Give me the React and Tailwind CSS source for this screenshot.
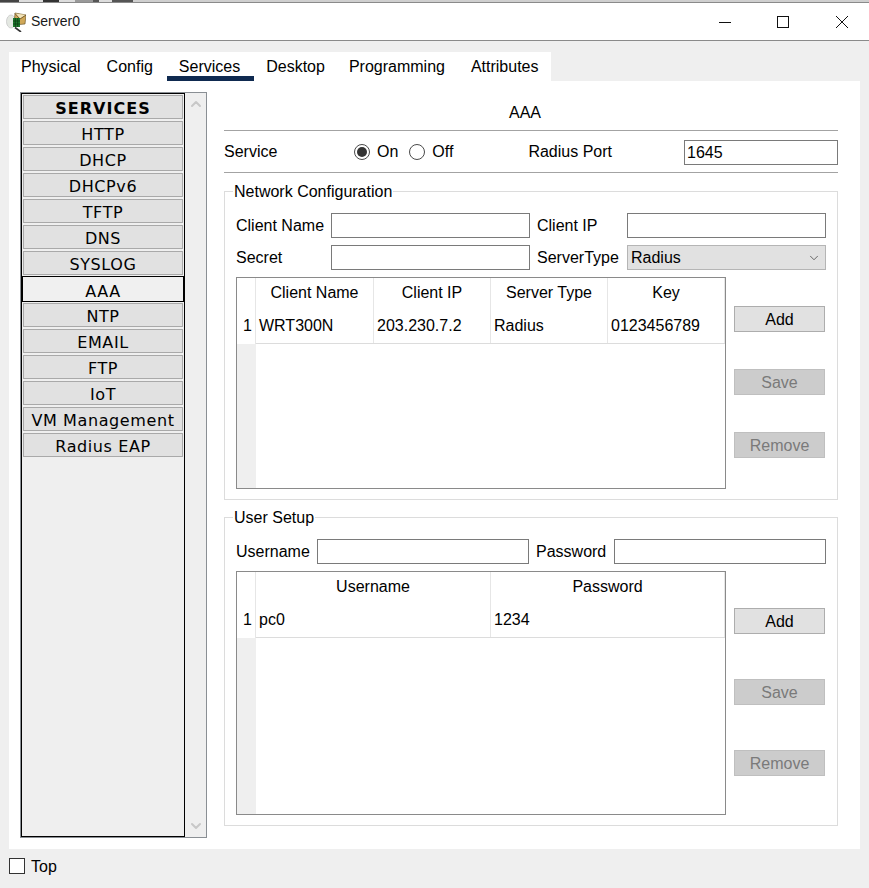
import { ChevronDown, ChevronUp } from 'lucide-react';

const TABS = ['Physical', 'Config', 'Services', 'Desktop', 'Programming', 'Attributes'];
const SERVICES = ['HTTP', 'DHCP', 'DHCPv6', 'TFTP', 'DNS', 'SYSLOG', 'AAA', 'NTP', 'EMAIL', 'FTP', 'IoT', 'VM Management', 'Radius EAP'];

function Field({ className = '', value = '' }) {
    return (
        <div className={`h-[25px] border border-[#7a7a7a] bg-white pl-[2px] leading-[23px] ${className}`}>{value}</div>
    );
}

function SideButton({ label, gap = '', disabled }) {
    return (
        <div
            className={`w-[91px] h-[26px] border text-center leading-[26px] ${gap} ${
                disabled
                    ? 'border-[#bfbfbf] bg-[#cccccc] text-[#7a7a7a]'
                    : 'border-[#adadad] bg-[#e1e1e1] text-black'
            }`}
        >
            {label}
        </div>
    );
}

function TableBox({ heightClass, columns, cells }) {
    return (
        <div className={`flex flex-col w-[490px] border border-[#8a8a8a] bg-white ${heightClass}`}>
            <div className="flex h-[32px]">
                <div className="w-[19px] shrink-0 border-r border-[#e6e6e6]" />
                {columns.map((col) => (
                    <div key={col.name} className={`${col.width} pt-[5px] text-center leading-[20px] border-r border-[#e6e6e6]`}>
                        {col.name}
                    </div>
                ))}
            </div>
            <div className="flex h-[34px]">
                <div className="w-[19px] shrink-0 pl-[6px] pt-[6px] leading-[20px] border-r border-[#e6e6e6]">1</div>
                <div className="flex grow border-b border-[#dcdcdc]">
                    {columns.map((col, i) => (
                        <div key={col.name} className={`${col.width} pl-[3px] pt-[6px] leading-[20px] border-r border-[#e6e6e6]`}>
                            {cells[i]}
                        </div>
                    ))}
                </div>
            </div>
            <div className="grow w-[19px] bg-[#efefef]" />
        </div>
    );
}

export default function App() {
    return (
        <div className="flex flex-col w-[869px] h-[888px] overflow-hidden bg-[#efefef] text-black text-[16px] font-['Liberation_Sans',Arial,sans-serif]">
            {/* strip of whatever was behind the window */}
            <div className="flex h-[2px] bg-[#cfcfcf]">
                <div className="w-[19px] bg-[#444444]" />
                <div className="w-[24px] bg-[#dddddd]" />
                <div className="w-[16px] bg-[#333333]" />
                <div className="w-[16px] bg-[#dddddd]" />
                <div className="w-[18px] bg-[#999999]" />
                <div className="w-[6px] bg-[#555555]" />
                <div className="w-[13px] bg-[#dddddd]" />
                <div className="w-[21px] bg-[#555555]" />
            </div>

            {/* title bar */}
            <div className="flex items-center h-[39px] bg-white border-t border-b border-[#8a8a8a]">
                <svg className="ml-[6px] w-[20px] h-[20px] shrink-0" viewBox="0 0 20 20">
                    <ellipse cx="5" cy="9.5" rx="4.5" ry="6.5" fill="#e4e8e2" stroke="#c8c8c8" strokeWidth="0.8" />
                    <path d="M9 1 L20 3 L19 12 L8 13 Z" fill="#d0a858" stroke="#5a4a20" strokeWidth="0.6" />
                    <path d="M9 1.5 L14 7 L20 3" fill="#f2e3b8" stroke="#5a3f10" strokeWidth="0.8" />
                    <rect x="7" y="6" width="7" height="9" fill="#1d7a2c" />
                    <path d="M9.3 6 V15 M11.7 6 V15 M7 9 H14 M7 12 H14" stroke="#0c3b14" strokeWidth="0.8" />
                    <path d="M9 15.5 L15 20" stroke="#333333" strokeWidth="1.6" />
                </svg>
                <span className="ml-[5px] text-[14px] text-[#1a1a1a]">Server0</span>
                <div className="ml-auto flex items-center">
                    <svg className="w-[12px] h-[12px] mr-[46px]" viewBox="0 0 12 12">
                        <path d="M0 6.5 H12" stroke="#111111" />
                    </svg>
                    <svg className="w-[12px] h-[12px] mr-[47px]" viewBox="0 0 12 12">
                        <rect x="0.5" y="0.5" width="11" height="11" fill="none" stroke="#111111" />
                    </svg>
                    <svg className="w-[12px] h-[12px] mr-[21px]" viewBox="0 0 12 12">
                        <path d="M0 0 L12 12 M12 0 L0 12" stroke="#111111" />
                    </svg>
                </div>
            </div>

            {/* tabs */}
            <div className="flex w-[542px] h-[29px] ml-[9px] mt-[11px] bg-white">
                {TABS.map((tab) => (
                    <div
                        key={tab}
                        className={`h-[29px] pl-[12px] leading-[29px] ${tab === 'Desktop' ? 'pr-[12px]' : 'pr-[14px]'} ${
                            tab === 'Services' ? 'border-b-[5px] border-[#0f2a50]' : ''
                        }`}
                    >
                        {tab}
                    </div>
                ))}
            </div>

            {/* panel */}
            <div className="flex w-[851px] h-[768px] ml-[9px] pl-[11px] pt-[11px] bg-white">
                {/* services list */}
                <div className="flex w-[187px] h-[746px] border border-[#8a8f94] bg-[#efefef]">
                    <div className="flex flex-col gap-[2px] w-[164px] h-full border border-black px-[1px] pt-[1px] font-['DejaVu_Sans',Verdana,sans-serif] text-[16px] tracking-[0.6px]">
                        <div className="h-[24px] border border-[#a9a9a9] bg-[#e1e1e1] text-center font-bold tracking-[1px] leading-[26px]">SERVICES</div>
                        {SERVICES.map((name) =>
                            name === 'AAA' ? (
                                <div key={name} className="h-[26px] -m-[1px] border border-black bg-[#f0f0f0] text-center leading-[30px]">
                                    {name}
                                </div>
                            ) : (
                                <div key={name} className="h-[24px] border border-[#a9a9a9] bg-[#e1e1e1] text-center leading-[26px]">
                                    {name}
                                </div>
                            )
                        )}
                    </div>
                    <div className="flex flex-col items-center justify-between grow py-[3px] text-[#c8c8c8]">
                        <ChevronUp className="w-[16px] h-[16px]" strokeWidth={3} />
                        <ChevronDown className="w-[16px] h-[16px]" strokeWidth={3} />
                    </div>
                </div>

                {/* AAA service form */}
                <div className="flex flex-col w-[614px] ml-[17px]">
                    <div className="h-[39px] pt-[12px] pr-[12px] text-center leading-[18px] border-b border-[#a3a3a3]">AAA</div>
                    <div className="flex items-center h-[42px] border-b border-[#a3a3a3]">
                        <span className="w-[130px]">Service</span>
                        <span className="flex items-center justify-center w-[16px] h-[16px] mt-px rounded-full border border-[#4a4a4a]">
                            <span className="w-[10px] h-[10px] rounded-full bg-[#333333]" />
                        </span>
                        <span className="ml-[7px] mt-px">On</span>
                        <span className="ml-[11px] mt-px w-[16px] h-[16px] rounded-full border border-[#4a4a4a]" />
                        <span className="ml-[7px] mt-px">Off</span>
                        <span className="ml-[75px] mt-px">Radius Port</span>
                        <Field className="ml-auto mt-[2px] w-[154px]" value="1645" />
                    </div>

                    <fieldset className="mt-[8px] h-[319px] border border-[#dcdcdc] px-[11px]">
                        <legend className="-ml-[3px] px-[1px] pt-[2px] leading-[18px]">Network Configuration</legend>
                        <div className="flex items-center mt-[12px] h-[25px]">
                            <span className="w-[95px]">Client Name</span>
                            <Field className="w-[199px]" />
                            <span className="ml-[7px] w-[90px]">Client IP</span>
                            <Field className="w-[199px]" />
                        </div>
                        <div className="flex items-center mt-[7px] h-[25px]">
                            <span className="w-[95px]">Secret</span>
                            <Field className="w-[199px]" />
                            <span className="ml-[7px] w-[90px]">ServerType</span>
                            <div className="flex items-center justify-between w-[199px] h-[25px] border border-[#b5b5b5] bg-[#e1e1e1] pl-[3px] pr-[4px]">
                                Radius
                                <ChevronDown className="w-[14px] h-[14px] text-[#333333]" strokeWidth={1.2} />
                            </div>
                        </div>
                        <div className="flex mt-[7px]">
                            <TableBox
                                heightClass="h-[212px]"
                                columns={[
                                    { name: 'Client Name', width: 'w-[118px]' },
                                    { name: 'Client IP', width: 'w-[117px]' },
                                    { name: 'Server Type', width: 'w-[117px]' },
                                    { name: 'Key', width: 'w-[117px]' },
                                ]}
                                cells={['WRT300N', '203.230.7.2', 'Radius', '0123456789']}
                            />
                            <div className="ml-[8px] flex flex-col pt-[29px]">
                                <SideButton label="Add" />
                                <SideButton label="Save" disabled gap="mt-[37px]" />
                                <SideButton label="Remove" disabled gap="mt-[37px]" />
                            </div>
                        </div>
                    </fieldset>

                    <fieldset className="mt-[7px] h-[319px] border border-[#dcdcdc] px-[11px]">
                        <legend className="-ml-[3px] px-[1px] pt-[2px] leading-[18px]">User Setup</legend>
                        <div className="flex items-center mt-[12px] h-[25px]">
                            <span className="w-[81px]">Username</span>
                            <Field className="w-[212px]" />
                            <span className="ml-[7px] w-[78px]">Password</span>
                            <Field className="w-[212px]" />
                        </div>
                        <div className="flex mt-[7px]">
                            <TableBox
                                heightClass="h-[244px]"
                                columns={[
                                    { name: 'Username', width: 'w-[235px]' },
                                    { name: 'Password', width: 'w-[234px]' },
                                ]}
                                cells={['pc0', '1234']}
                            />
                            <div className="ml-[8px] flex flex-col pt-[37px]">
                                <SideButton label="Add" />
                                <SideButton label="Save" disabled gap="mt-[45px]" />
                                <SideButton label="Remove" disabled gap="mt-[45px]" />
                            </div>
                        </div>
                    </fieldset>
                </div>
            </div>

            {/* always on top */}
            <div className="flex items-center ml-[9px] mt-[9px] h-[16px]">
                <span className="w-[16px] h-[16px] border border-[#333333] bg-white" />
                <span className="ml-[6px] mt-px">Top</span>
            </div>
        </div>
    );
}
